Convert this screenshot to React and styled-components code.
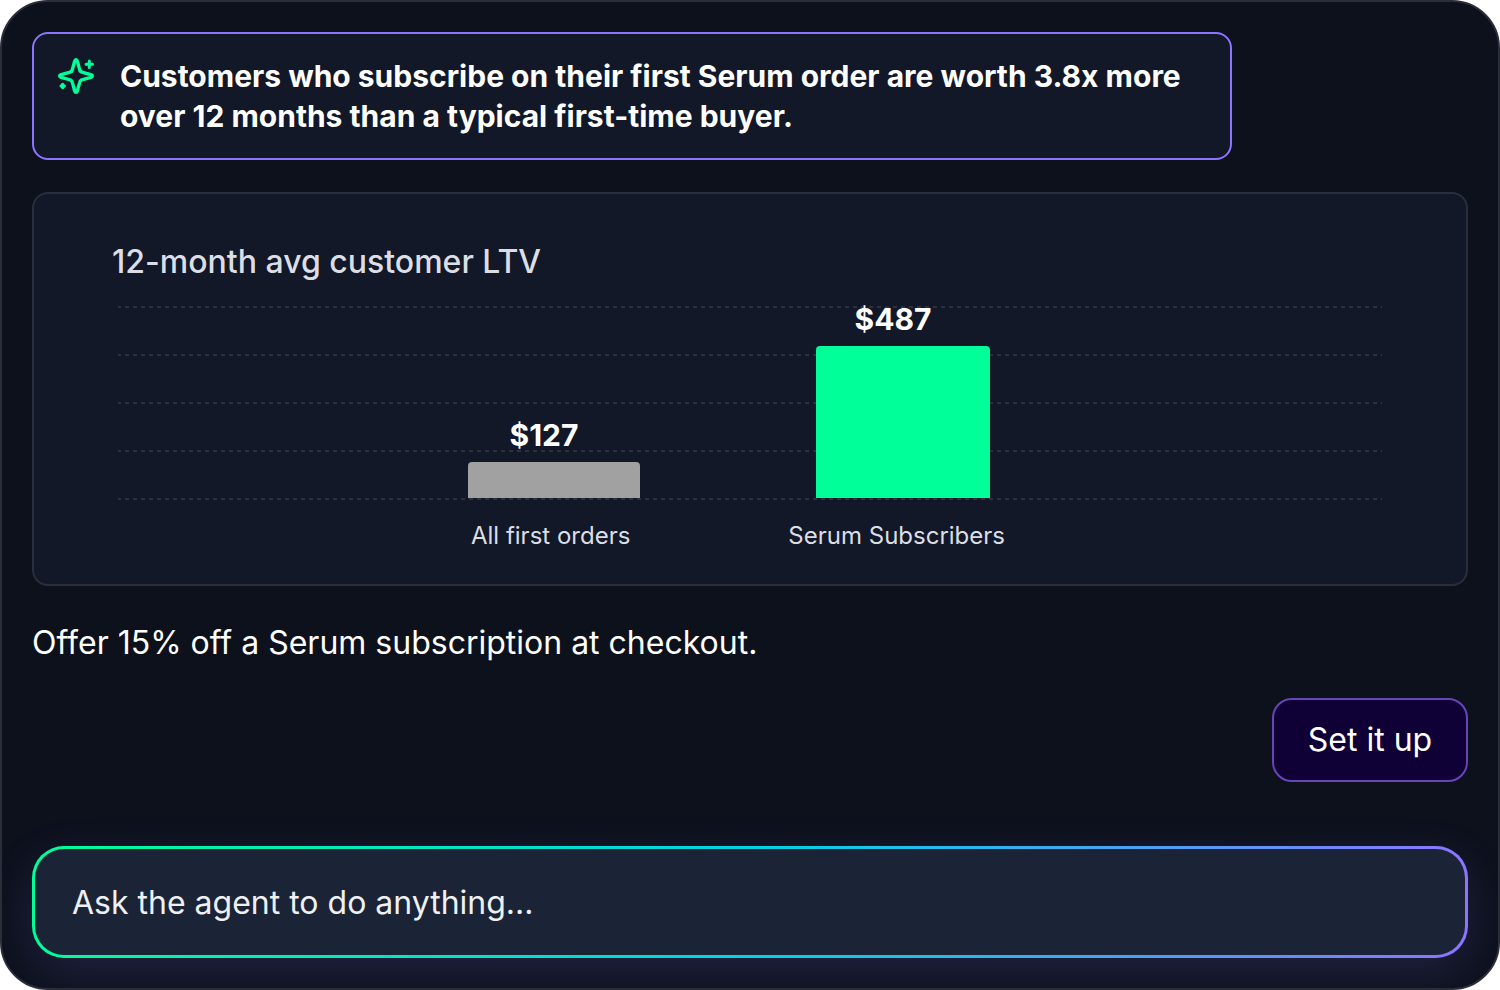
import React, { useState } from "react";
import styled, { createGlobalStyle } from "styled-components";

const bars = [
  { label: "All first orders", value: "$127", width: 172, height: 36, color: "#a1a1a1" },
  { label: "Serum Subscribers", value: "$487", width: 174, height: 152, color: "#00ff99" },
];

const gridLines = [0, 1, 2, 3, 4];

function SparklesIcon() {
  return (
    <Icon viewBox="0 0 40 40" fill="none" aria-hidden="true">
      <path
        d="M20 3.6C20.8 3.6 21.1 4.2 21.3 5L23.6 13.4C23.9 14.9 25.1 16.1 26.6 16.4L35 18.7C36.8 19.2 36.8 20.8 35 21.3L26.6 23.6C25.1 23.9 23.9 25.1 23.6 26.6L21.3 35C20.8 36.8 19.2 36.8 18.7 35L16.4 26.6C16.1 25.1 14.9 23.9 13.4 23.6L5 21.3C3.2 20.8 3.2 19.2 5 18.7L13.4 16.4C14.9 16.1 16.1 14.9 16.4 13.4L18.7 5C18.9 4.2 19.2 3.6 20 3.6Z"
        stroke="#00ff99"
        strokeWidth="3.4"
        strokeLinejoin="round"
      />
      <path d="M33.3 5V11.4M30.1 8.2H36.5" stroke="#00ff99" strokeWidth="3" strokeLinecap="round" />
      <path d="M6.7 28.6V31.4M5.3 30H8.1" stroke="#00ff99" strokeWidth="3.6" strokeLinecap="round" />
    </Icon>
  );
}

function App() {
  const [message, setMessage] = useState("");

  const handleMessage = (e) => {
    setMessage(e.target.value);
  };

  return (
    <>
      <GlobalStyle />
      <Panel>
        <Insight>
          <SparklesIcon />
          <InsightText>
            Customers who subscribe on their first Serum order are worth 3.8x
            more over 12 months than a typical first-time buyer.
          </InsightText>
        </Insight>

        <ChartCard>
          <ChartTitle>12-month avg customer LTV</ChartTitle>
          <Plot>
            <GridLines>
              {gridLines.map((line) => (
                <GridLine key={line} />
              ))}
            </GridLines>
            <Bars>
              {bars.map((bar) => (
                <BarColumn key={bar.label} $width={bar.width}>
                  <BarValue>{bar.value}</BarValue>
                  <Bar $height={bar.height} $color={bar.color} />
                </BarColumn>
              ))}
            </Bars>
          </Plot>
          <Labels>
            {bars.map((bar) => (
              <span key={bar.label}>{bar.label}</span>
            ))}
          </Labels>
        </ChartCard>

        <Offer>Offer 15% off a Serum subscription at checkout.</Offer>
        <SetupButton type="button">Set it up</SetupButton>

        <Prompt
          type="text"
          aria-label="Ask the agent to do anything"
          placeholder="Ask the agent to do anything..."
          value={message}
          onChange={handleMessage}
        />
      </Panel>
    </>
  );
}

const GlobalStyle = createGlobalStyle`
  * {
    box-sizing: border-box;
  }

  body {
    margin: 0;
    background-color: #ffffff;
    font-family: Inter, "Liberation Sans", sans-serif;
  }
`;

const Panel = styled.main`
  display: flex;
  flex-direction: column;
  min-height: 100vh;
  padding: 30px;
  border: 2px solid #2a2e3b;
  border-radius: 48px;
  background-color: #0d111c;
  overflow: hidden;
`;

const Insight = styled.section`
  display: flex;
  gap: 24px;
  max-width: 1200px;
  padding: 22px;
  border: 2px solid #8b75ff;
  border-radius: 16px;
  background-color: #121827;
`;

const Icon = styled.svg`
  flex: none;
  width: 40px;
  height: 40px;
`;

const InsightText = styled.p`
  margin: 0;
  color: #ffffff;
  font-size: 30px;
  font-weight: 700;
  line-height: 40px;
`;

const ChartCard = styled.section`
  margin-top: 32px;
  padding: 48px 84px 32px;
  border: 2px solid #2a2e3b;
  border-radius: 16px;
  background-color: #121827;
`;

const ChartTitle = styled.h2`
  margin: 0 -6px;
  color: #dcdee6;
  font-size: 32px;
  font-weight: 500;
  line-height: 40px;
`;

const Plot = styled.div`
  display: grid;
  margin-top: 24px;
`;

const GridLines = styled.div`
  display: flex;
  flex-direction: column;
  grid-area: 1 / 1;
  gap: 46px;
`;

const GridLine = styled.div`
  height: 2px;
  background: repeating-linear-gradient(
    to right,
    #2d303d 0 3px,
    transparent 3px 7px,
    #2d303d 7px 8px
  );
`;

const Bars = styled.div`
  display: flex;
  grid-area: 1 / 1;
  align-items: flex-end;
  justify-content: center;
  gap: 176px;
  height: 192px;
  padding-right: 42px;
`;

const BarColumn = styled.div`
  display: flex;
  flex-direction: column;
  width: ${({ $width }) => $width}px;
`;

const BarValue = styled.span`
  padding: 0 20px 8px 0;
  color: #ffffff;
  font-size: 30px;
  font-weight: 700;
  line-height: 38px;
  text-align: center;
`;

const Bar = styled.div`
  height: ${({ $height }) => $height}px;
  border-radius: 4px 4px 0 0;
  background-color: ${({ $color }) => $color};
`;

const Labels = styled.div`
  display: flex;
  justify-content: center;
  gap: 158px;
  margin-top: 20px;
  padding-right: 24px;
  color: #dcdee6;
  font-size: 24px;
  font-weight: 400;
  line-height: 32px;
`;

const Offer = styled.p`
  margin: 36px 0 0;
  color: #ffffff;
  font-size: 32px;
  font-weight: 400;
  line-height: 42px;
`;

const SetupButton = styled.button`
  align-self: flex-end;
  min-width: 196px;
  margin-top: 34px;
  padding: 20px 32px;
  border: 2px solid #6744b8;
  border-radius: 20px;
  background-color: #0f0035;
  color: #ffffff;
  font-family: inherit;
  font-size: 32px;
  font-weight: 400;
  line-height: 40px;
`;

const Prompt = styled.input`
  width: 100%;
  height: 112px;
  margin-top: 64px;
  padding: 0 37px;
  border: 3px solid transparent;
  border-radius: 32px;
  background: linear-gradient(#1b2336, #1b2336) padding-box,
    linear-gradient(to right, #00ff99, #00d4e4 50%, #8b75ff) border-box;
  box-shadow: 0 16px 48px rgba(139, 117, 255, 0.16);
  color: #eef0f4;
  font-family: inherit;
  font-size: 32px;
  font-weight: 400;
  outline: none;

  &::placeholder {
    color: #eef0f4;
    opacity: 1;
  }
`;

export default App;
